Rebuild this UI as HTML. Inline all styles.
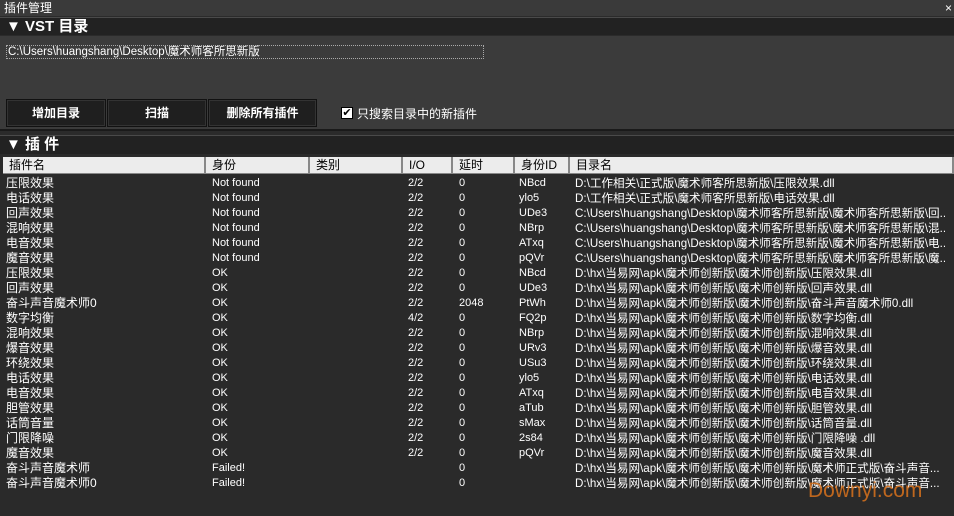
<!DOCTYPE html>
<html><head><meta charset="utf-8"><style>
*{margin:0;padding:0;box-sizing:border-box}
body{width:954px;height:516px;background:#2b2b2b;font-family:"Liberation Sans","Noto Sans CJK SC",sans-serif;color:#fff;position:relative;overflow:hidden;font-size:11px}
.a{position:absolute;white-space:nowrap}
.title{left:0;top:0;width:954px;height:16px;background:#3a3a3a;font-size:12px;padding-left:4px;line-height:16px}
.sec{left:0;width:954px;height:18px;background:#222;border-top:1px solid #4a4a4a;font-weight:bold;font-size:15px;line-height:17px;padding-left:6px}
.panel{left:0;top:36px;width:954px;height:95px;background:#3b3b3b;border-bottom:2px solid #1a1a1a}
.btn{top:99px;height:28px;background:#1f1f1f;border:1px solid #111;box-shadow:inset 0 0 0 1px #333;font-weight:bold;font-size:12px;text-align:center;line-height:26px}
.hd{top:157px;height:17px;background:#ececec;color:#000;font-size:12px;line-height:17px;padding-left:6px;border-right:2px solid #888;border-bottom:1px solid #888}
.row{font-size:11px;line-height:15px;height:15px}
.p{font-size:11.6px;width:370px;overflow:hidden;text-overflow:clip}
</style></head><body>
<div class="a title">插件管理</div>
<div class="a" style="right:2px;top:0;font-size:12px;line-height:16px">×</div>
<div class="a sec" style="top:17px">▼ VST 目录</div>
<div class="a panel"></div>
<div class="a" style="left:6px;top:45px;width:478px;height:14px;border:1px dotted #aaa;font-size:11.5px;line-height:12px;padding-left:1px">C:\Users\huangshang\Desktop\魔术师客所思新版</div>
<div class="a btn" style="left:6px;width:100px">增加目录</div>
<div class="a btn" style="left:107px;width:100px">扫描</div>
<div class="a btn" style="left:208px;width:109px">删除所有插件</div>
<div class="a" style="left:341px;top:107px;width:12px;height:12px;background:#fff;border:1px solid #000;color:#000;font-size:11px;line-height:10px;text-align:center">✔</div>
<div class="a" style="left:357px;top:105px;font-size:12px">只搜索目录中的新插件</div>
<div class="a sec" style="top:135px;height:19px">▼ 插 件</div>
<div class="a" style="left:0;top:154px;width:954px;height:362px;background:#2a2a2a"></div>
<div class="a hd" style="left:3px;width:203px">插件名</div>
<div class="a hd" style="left:206px;width:104px">身份</div>
<div class="a hd" style="left:310px;width:93px">类别</div>
<div class="a hd" style="left:403px;width:50px">I/O</div>
<div class="a hd" style="left:453px;width:62px">延时</div>
<div class="a hd" style="left:515px;width:55px">身份ID</div>
<div class="a hd" style="left:570px;width:384px">目录名</div>
<div id="rows"></div>
<div class="a" style="left:808px;top:479px;font-size:21px;color:#d9721c;opacity:.85;font-family:'Liberation Sans',sans-serif">Downyi.com</div>
<script>
var d=[
["压限效果","Not found","2/2","0","NBcd","D:\\工作相关\\正式版\\魔术师客所思新版\\压限效果.dll"],
["电话效果","Not found","2/2","0","ylo5","D:\\工作相关\\正式版\\魔术师客所思新版\\电话效果.dll"],
["回声效果","Not found","2/2","0","UDe3","C:\\Users\\huangshang\\Desktop\\魔术师客所思新版\\魔术师客所思新版\\回..."],
["混响效果","Not found","2/2","0","NBrp","C:\\Users\\huangshang\\Desktop\\魔术师客所思新版\\魔术师客所思新版\\混..."],
["电音效果","Not found","2/2","0","ATxq","C:\\Users\\huangshang\\Desktop\\魔术师客所思新版\\魔术师客所思新版\\电..."],
["魔音效果","Not found","2/2","0","pQVr","C:\\Users\\huangshang\\Desktop\\魔术师客所思新版\\魔术师客所思新版\\魔..."],
["压限效果","OK","2/2","0","NBcd","D:\\hx\\当易网\\apk\\魔术师创新版\\魔术师创新版\\压限效果.dll"],
["回声效果","OK","2/2","0","UDe3","D:\\hx\\当易网\\apk\\魔术师创新版\\魔术师创新版\\回声效果.dll"],
["奋斗声音魔术师0","OK","2/2","2048","PtWh","D:\\hx\\当易网\\apk\\魔术师创新版\\魔术师创新版\\奋斗声音魔术师0.dll"],
["数字均衡","OK","4/2","0","FQ2p","D:\\hx\\当易网\\apk\\魔术师创新版\\魔术师创新版\\数字均衡.dll"],
["混响效果","OK","2/2","0","NBrp","D:\\hx\\当易网\\apk\\魔术师创新版\\魔术师创新版\\混响效果.dll"],
["爆音效果","OK","2/2","0","URv3","D:\\hx\\当易网\\apk\\魔术师创新版\\魔术师创新版\\爆音效果.dll"],
["环绕效果","OK","2/2","0","USu3","D:\\hx\\当易网\\apk\\魔术师创新版\\魔术师创新版\\环绕效果.dll"],
["电话效果","OK","2/2","0","ylo5","D:\\hx\\当易网\\apk\\魔术师创新版\\魔术师创新版\\电话效果.dll"],
["电音效果","OK","2/2","0","ATxq","D:\\hx\\当易网\\apk\\魔术师创新版\\魔术师创新版\\电音效果.dll"],
["胆管效果","OK","2/2","0","aTub","D:\\hx\\当易网\\apk\\魔术师创新版\\魔术师创新版\\胆管效果.dll"],
["话筒音量","OK","2/2","0","sMax","D:\\hx\\当易网\\apk\\魔术师创新版\\魔术师创新版\\话筒音量.dll"],
["门限降噪","OK","2/2","0","2s84","D:\\hx\\当易网\\apk\\魔术师创新版\\魔术师创新版\\门限降噪 .dll"],
["魔音效果","OK","2/2","0","pQVr","D:\\hx\\当易网\\apk\\魔术师创新版\\魔术师创新版\\魔音效果.dll"],
["奋斗声音魔术师","Failed!","","0","","D:\\hx\\当易网\\apk\\魔术师创新版\\魔术师创新版\\魔术师正式版\\奋斗声音..."],
["奋斗声音魔术师0","Failed!","","0","","D:\\hx\\当易网\\apk\\魔术师创新版\\魔术师创新版\\魔术师正式版\\奋斗声音..."]];
var x=[6,212,408,459,519,575],h="";
d.forEach(function(r,i){var y=176+i*15;r.forEach(function(c,j){h+='<div class="a row'+(j==5?' p':'')+'" style="left:'+x[j]+'px;top:'+y+'px;'+(j==0?'font-size:12px':'')+'">'+c+'</div>';});});
document.getElementById("rows").innerHTML=h;
</script>
</body></html>
